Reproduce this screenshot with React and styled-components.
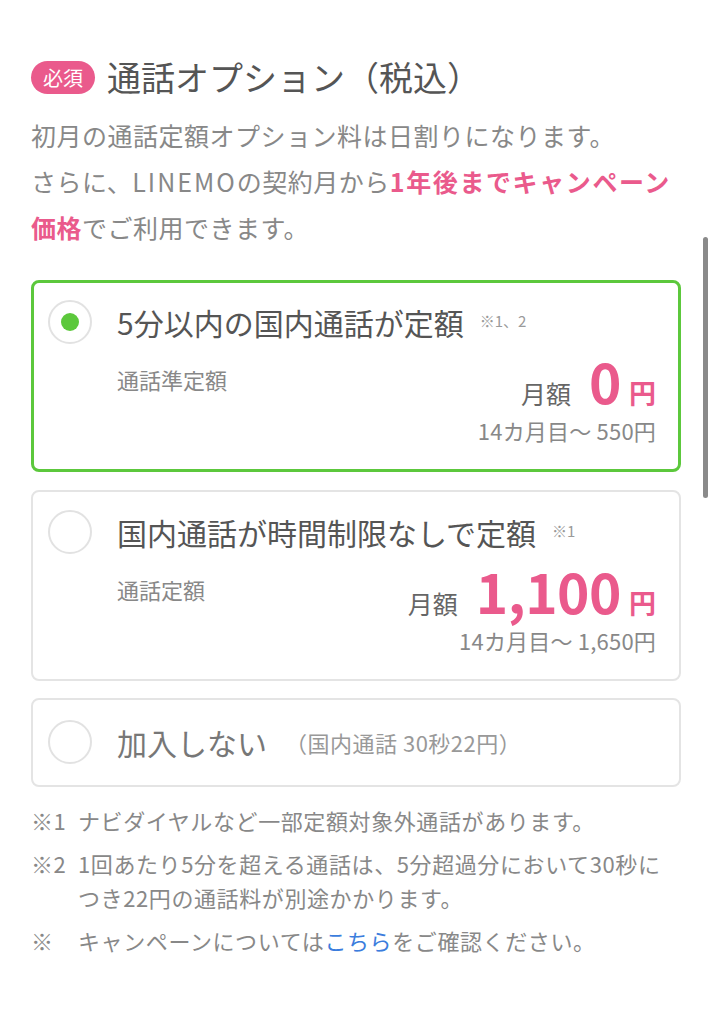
import React from 'react'
import styled, { createGlobalStyle } from 'styled-components'

const PINK = '#ea5a8c'
const GREEN = '#5cc83c'

const GlobalStyle = createGlobalStyle`
  body {
    margin: 0;
    background: #fff;
    font-family: "Noto Sans CJK JP", "Noto Sans", sans-serif;
    -webkit-font-smoothing: antialiased;
  }
`

const Page = styled.div`
  position: relative;
  padding: 55px 31px 40px 31px;
  color: #555;
`

const Header = styled.div`
  display: flex;
  align-items: center;
  gap: 12px;
  height: 44px;
`

const Badge = styled.span`
  display: inline-block;
  height: 33px;
  line-height: 33px;
  padding: 0 12px;
  border-radius: 17px;
  background: ${PINK};
  color: #fff;
  font-size: 20px;
`

const Title = styled.h2`
  margin: 0;
  font-size: 34px;
  font-weight: 400;
  line-height: 44px;
  color: #555;
`

const Lead = styled.p`
  margin: 13px 0 0;
  font-size: 25px;
  line-height: 46px;
  color: #888;
  letter-spacing: 0.5px;
`

const Latin = styled.span`
  letter-spacing: 2px;
`

const Em = styled.strong`
  color: ${PINK};
  font-weight: 700;
  letter-spacing: ${(p) => p.$wide ? '1.6px' : '0.5px'};
`

const Cards = styled.div`
  display: flex;
  flex-direction: column;
  gap: 17px;
  margin-top: 30px;
  & > :first-child {
    margin-bottom: 1px;
  }
`

const Card = styled.div`
  display: flex;
  align-items: flex-start;
  gap: 25px;
  border: ${(p) => (p.$selected ? `3px solid ${GREEN}` : '2px solid #e4e4e4')};
  border-radius: 8px;
  padding: ${(p) => (p.$selected ? '17px 22px 26px 14px' : '18px 23px 26px 15px')};
  padding-top: ${(p) => (p.$compact ? '20px' : undefined)};
  padding-bottom: ${(p) => (p.$compact ? '21px' : undefined)};
`

const Radio = styled.span`
  flex: none;
  box-sizing: border-box;
  width: 44px;
  height: 44px;
  border-radius: 50%;
  border: 2px solid #e2e2e2;
  display: flex;
  align-items: center;
  justify-content: center;
  &::after {
    content: '';
    display: ${(p) => (p.$checked ? 'block' : 'none')};
    width: 18px;
    height: 18px;
    border-radius: 50%;
    background: ${GREEN};
  }
`

const Content = styled.div`
  flex: 1;
  min-width: 0;
`

const PlanRow = styled.div`
  display: flex;
  align-items: center;
  height: 44px;
  white-space: nowrap;
`

const PlanName = styled.span`
  font-size: 30px;
  color: ${(p) => (p.$muted ? '#777' : '#555')};
  line-height: 44px;
`

const Note = styled.span`
  margin-left: 16px;
  font-size: 15px;
  color: #9a9a9a;
  position: relative;
  top: -2px;
`

const Aside = styled.span`
  margin-left: 18px;
  font-size: 22px;
  letter-spacing: 0.5px;
  color: #999;
`

const Body = styled.div`
  display: flex;
  justify-content: space-between;
  align-items: flex-start;
  margin-top: 8px;
`

const Sub = styled.span`
  padding-top: 12px;
  font-size: 22px;
  line-height: 30px;
  color: #888;
`

const PriceBox = styled.div`
  display: flex;
  flex-direction: column;
  align-items: flex-end;
`

const PriceLine = styled.div`
  display: flex;
  align-items: baseline;
  height: 56px;
  line-height: 56px;
`

const Monthly = styled.span`
  font-size: 25px;
  color: #666;
  margin-right: 18px;
`

const Amount = styled.span`
  font-size: 55px;
  font-weight: 700;
  color: ${PINK};
  letter-spacing: -0.5px;
`

const Yen = styled.span`
  margin-left: 8px;
  font-size: 27px;
  font-weight: 700;
  color: ${PINK};
`

const Later = styled.div`
  margin-top: 9px;
  font-size: 22px;
  line-height: 26px;
  color: #888;
  letter-spacing: 0.2px;
`

const Notes = styled.div`
  margin-top: 16px;
  display: flex;
  flex-direction: column;
  gap: 9px;
`

const NoteItem = styled.div`
  display: grid;
  grid-template-columns: 47px 1fr;
  font-size: 22px;
  line-height: 34px;
  letter-spacing: 0.6px;
  color: #888;
`

const Link = styled.a`
  color: #3b7ddd;
  text-decoration: none;
`

const ScrollThumb = styled.div`
  position: absolute;
  top: 237px;
  right: 4px;
  width: 5px;
  height: 261px;
  border-radius: 3px;
  background: #8a8a8a;
`

const plans = [
  {
    name: '5分以内の国内通話が定額',
    note: '※1、2',
    sub: '通話準定額',
    amount: '0',
    later: '14カ月目〜 550円',
    selected: true,
  },
  {
    name: '国内通話が時間制限なしで定額',
    note: '※1',
    sub: '通話定額',
    amount: '1,100',
    later: '14カ月目〜 1,650円',
    selected: false,
  },
]

const App = () => {
  return (
    <Page>
      <GlobalStyle />
      <Header>
        <Badge>必須</Badge>
        <Title>通話オプション（税込）</Title>
      </Header>
      <Lead>
        初月の通話定額オプション料は日割りになります。
        <br />
        さらに、<Latin>LINEMO</Latin>の契約月から<Em $wide>1年後までキャンペーン</Em>
        <br />
        <Em>価格</Em>でご利用できます。
      </Lead>

      <Cards>
        {plans.map((p) => (
          <Card key={p.name} $selected={p.selected}>
            <Radio $checked={p.selected} />
            <Content>
              <PlanRow>
                <PlanName>{p.name}</PlanName>
                <Note>{p.note}</Note>
              </PlanRow>
              <Body>
                <Sub>{p.sub}</Sub>
                <PriceBox>
                  <PriceLine>
                    <Monthly>月額</Monthly>
                    <Amount>{p.amount}</Amount>
                    <Yen>円</Yen>
                  </PriceLine>
                  <Later>{p.later}</Later>
                </PriceBox>
              </Body>
            </Content>
          </Card>
        ))}
        <Card $compact>
          <Radio />
          <Content>
            <PlanRow>
              <PlanName $muted>加入しない</PlanName>
              <Aside>（国内通話 30秒22円）</Aside>
            </PlanRow>
          </Content>
        </Card>
      </Cards>

      <Notes>
        <NoteItem>
          <span>※1</span>
          <span>ナビダイヤルなど一部定額対象外通話があります。</span>
        </NoteItem>
        <NoteItem>
          <span>※2</span>
          <span>1回あたり5分を超える通話は、5分超過分において30秒につき22円の通話料が別途かかります。</span>
        </NoteItem>
        <NoteItem>
          <span>※</span>
          <span>
            キャンペーンについては<Link href="#">こちら</Link>をご確認ください。
          </span>
        </NoteItem>
      </Notes>
      <ScrollThumb />
    </Page>
  )
}

export default App
